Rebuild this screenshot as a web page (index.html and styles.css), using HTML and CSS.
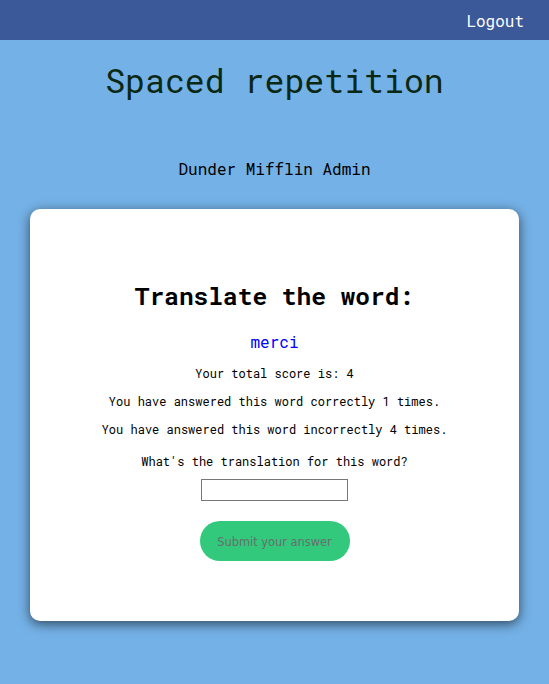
FILE: index.html
```html
<!DOCTYPE html>
<html>
<head>
<meta charset="utf-8">
<link rel="stylesheet" href="styles.css">
</head>
<body>
<header class="topbar">
  <a class="logout" href="#">Logout</a>
</header>
<main class="main">
  <h1 class="title">Spaced repetition</h1>
  <p class="user">Dunder Mifflin Admin</p>
  <section class="card">
    <h2 class="card-title">Translate the word:</h2>
    <p class="word">merci</p>
    <p class="info score">Your total score is: 4</p>
    <p class="info">You have answered this word correctly 1 times.</p>
    <p class="info">You have answered this word incorrectly 4 times.</p>
    <form class="answer-form">
      <label class="info question" for="guess">What's the translation for this word?</label>
      <input class="guess" id="guess" type="text">
      <button class="submit" type="button">Submit your answer</button>
    </form>
  </section>
</main>
</body>
</html>
```

FILE: styles.css
```css
html, body {
  margin: 0;
  padding: 0;
}
body {
  background: #74b1e6;
  font-family: "Roboto Mono", "DejaVu Sans Mono", "Liberation Mono", monospace;
  min-height: 684px;
}
.topbar {
  height: 40px;
  background: #3b5998;
  display: flex;
  justify-content: flex-end;
  align-items: center;
  padding: 0 25px;
}
.logout {
  color: #ffffff;
  text-decoration: none;
  font-size: 16px;
  line-height: 20px;
  margin-top: 2px;
}
.main {
  display: flex;
  flex-direction: column;
  align-items: center;
  padding: 0 30px;
}
.title {
  margin: 20px 0 0;
  font-size: 33.2px;
  line-height: 40px;
  font-weight: 400;
  color: #0a2814;
}
.user {
  margin: 59px 0 0;
  font-size: 16px;
  line-height: 20px;
  color: #000;
}
.card {
  margin-top: 30px;
  align-self: stretch;
  background: #fff;
  border-radius: 10px;
  box-shadow: 0 3px 12px rgba(0, 0, 0, 0.6);
  display: flex;
  flex-direction: column;
  align-items: center;
  padding: 71px 0 60px;
}
.card-title {
  margin: 0;
  font-size: 24.5px;
  line-height: 32px;
  font-weight: 700;
  color: #000;
}
.word {
  margin: 20px 0 0;
  font-size: 16px;
  line-height: 20px;
  color: #0000ff;
}
.info {
  margin: 12px 0 0;
  font-size: 12px;
  line-height: 16px;
  color: #000;
}
.score {
  margin-top: 13px;
}
.answer-form {
  display: flex;
  flex-direction: column;
  align-items: center;
}
.question {
  margin-top: 16px;
}
.guess {
  margin-top: 10px;
  margin-left: 1px;
  width: 147px;
  height: 22px;
  box-sizing: border-box;
  border: 1px solid #767676;
  border-radius: 0;
  padding: 1px 2px;
  background: #fff;
}
.submit {
  margin-top: 20px;
  margin-left: 2px;
  width: 150px;
  height: 40px;
  border: none;
  border-radius: 20px;
  background: #32c97d;
  color: #66706b;
  font-family: "DejaVu Sans", Verdana, sans-serif;
  font-size: 11.4px;
  line-height: 14px;
  padding: 2px 2px 0 0;
}
```
